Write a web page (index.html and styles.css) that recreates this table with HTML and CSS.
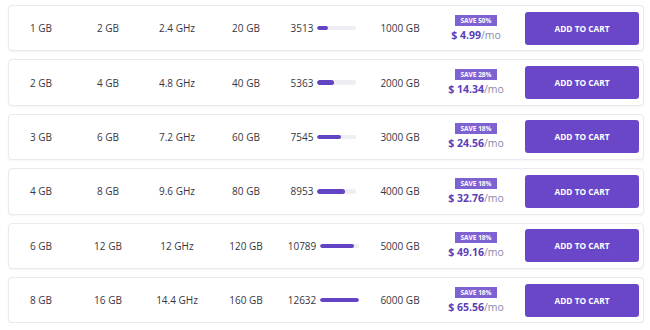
FILE: index.html
```html
<!DOCTYPE html>
<html lang="en">
<head>
<meta charset="utf-8">
<title>Plans</title>
<link rel="stylesheet" href="styles.css">
</head>
<body>
<div class="list">
  <div class="plan">
    <div class="cell">1 GB</div><div class="cell">2 GB</div><div class="cell">2.4 GHz</div><div class="cell">20 GB</div>
    <div class="cell score"><span>3513</span><span class="bar"><span class="fill" style="width:27.8%"></span></span></div>
    <div class="cell">1000 GB</div>
    <div class="cell price"><span class="badge">SAVE 50%</span><span class="amount"><b>$ 4.99</b>/mo</span></div>
    <button class="cart">ADD TO CART</button>
  </div>
  <div class="plan">
    <div class="cell">2 GB</div><div class="cell">4 GB</div><div class="cell">4.8 GHz</div><div class="cell">40 GB</div>
    <div class="cell score"><span>5363</span><span class="bar"><span class="fill" style="width:42.5%"></span></span></div>
    <div class="cell">2000 GB</div>
    <div class="cell price"><span class="badge">SAVE 28%</span><span class="amount"><b>$ 14.34</b>/mo</span></div>
    <button class="cart">ADD TO CART</button>
  </div>
  <div class="plan">
    <div class="cell">3 GB</div><div class="cell">6 GB</div><div class="cell">7.2 GHz</div><div class="cell">60 GB</div>
    <div class="cell score"><span>7545</span><span class="bar"><span class="fill" style="width:59.7%"></span></span></div>
    <div class="cell">3000 GB</div>
    <div class="cell price"><span class="badge">SAVE 18%</span><span class="amount"><b>$ 24.56</b>/mo</span></div>
    <button class="cart">ADD TO CART</button>
  </div>
  <div class="plan">
    <div class="cell">4 GB</div><div class="cell">8 GB</div><div class="cell">9.6 GHz</div><div class="cell">80 GB</div>
    <div class="cell score"><span>8953</span><span class="bar"><span class="fill" style="width:70.9%"></span></span></div>
    <div class="cell">4000 GB</div>
    <div class="cell price"><span class="badge">SAVE 18%</span><span class="amount"><b>$ 32.76</b>/mo</span></div>
    <button class="cart">ADD TO CART</button>
  </div>
  <div class="plan">
    <div class="cell">6 GB</div><div class="cell">12 GB</div><div class="cell">12 GHz</div><div class="cell">120 GB</div>
    <div class="cell score"><span>10789</span><span class="bar"><span class="fill" style="width:85.4%"></span></span></div>
    <div class="cell">5000 GB</div>
    <div class="cell price"><span class="badge">SAVE 18%</span><span class="amount"><b>$ 49.16</b>/mo</span></div>
    <button class="cart">ADD TO CART</button>
  </div>
  <div class="plan">
    <div class="cell">8 GB</div><div class="cell">16 GB</div><div class="cell">14.4 GHz</div><div class="cell">160 GB</div>
    <div class="cell score"><span>12632</span><span class="bar"><span class="fill" style="width:100%"></span></span></div>
    <div class="cell">6000 GB</div>
    <div class="cell price"><span class="badge">SAVE 18%</span><span class="amount"><b>$ 65.56</b>/mo</span></div>
    <button class="cart">ADD TO CART</button>
  </div>
</div>
</body>
</html>
```

FILE: styles.css
```css
html, body {
  margin: 0;
  background: #ffffff;
}
body {
  font-family: "Open Sans", "Noto Sans", sans-serif;
  font-size: 10px;
  color: #36363f;
}
.list {
  padding: 5px 6px 0 8px;
  display: flex;
  flex-direction: column;
  gap: 8px;
}
.plan {
  box-sizing: border-box;
  height: 46.4px;
  display: grid;
  grid-template-columns: 64px 70px 68px 70px 85px 68px 84px 114px;
  align-items: center;
  border: 1px solid #e9e9ee;
  border-radius: 4px;
  box-shadow: 0 1px 2px rgba(30, 20, 70, 0.05);
  background: #fff;
}
.cell {
  text-align: center;
  white-space: nowrap;
}
.score {
  display: flex;
  align-items: center;
  justify-content: center;
  gap: 4px;
}
.bar {
  display: block;
  width: 39px;
  height: 4.5px;
  border-radius: 3px;
  background: #ededf3;
  overflow: hidden;
}
.fill {
  display: block;
  height: 100%;
  border-radius: 3px;
  background: #6244c4;
}
.price {
  display: flex;
  flex-direction: column;
  align-items: center;
  gap: 2px;
}
.badge {
  display: block;
  background: #7e62d2;
  color: #fff;
  font-size: 6.5px;
  font-weight: 700;
  line-height: 11px;
  padding: 0 6px;
}
.amount {
  font-size: 10.5px;
  line-height: 14px;
  color: #8d87ad;
}
.amount b {
  color: #5b3fb8;
  font-weight: 700;
}
.cart {
  margin-left: 7px;
  width: 114px;
  height: 33px;
  border: 0;
  border-radius: 3px;
  background: #6a47c9;
  color: #fff;
  font-family: "Open Sans", "Noto Sans", sans-serif;
  font-size: 8.3px;
  font-weight: 700;
  padding: 0;
}
```
